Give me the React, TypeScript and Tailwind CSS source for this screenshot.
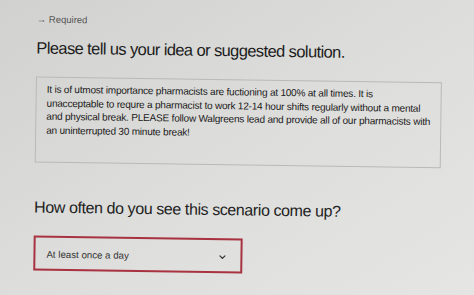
import { ChevronDown } from 'lucide-react'

export default function App() {
    return (
        <div
            className="w-[474px] h-[295px] overflow-hidden bg-gradient-to-br from-[#d1d1cf] via-[#dddddb] to-[#e5e5e3]"
            style={{ fontFamily: '"Liberation Sans", Arial, sans-serif' }}
        >
            <div className="pl-[37px] pt-[14px] rotate-[0.8deg] origin-top-left">
                {/* Required tag */}
                <div className="text-[9.5px] text-[#555] leading-none">→ Required</div>

                {/* Question 1 */}
                <h2 className="mt-[15px] text-[16.5px] leading-none text-[#1c1c1c] tracking-[-0.6px]">
                    Please tell us your idea or suggested solution.
                </h2>

                <div className="mt-[21px] w-[406px] h-[86px] border border-[#b9b9b7] px-[10px] pt-[5px] text-[10px] leading-[13.5px] text-[#1a1a1a] tracking-[-0.2px] whitespace-nowrap">
                    It is of utmost importance pharmacists are fuctioning at 100% at all times. It is
                    <br />
                    unacceptable to requre a pharmacist to work 12-14 hour shifts regularly without a mental
                    <br />
                    and physical break. PLEASE follow Walgreens lead and provide all of our pharmacists with
                    <br />
                    an uninterrupted 30 minute break!
                </div>

                {/* Question 2 */}
                <h2 className="mt-[37px] text-[16px] leading-none text-[#222] tracking-[-0.4px]">
                    How often do you see this scenario come up?
                </h2>

                <div className="mt-[20px] w-[209px] h-[35px] border-2 border-[#a8323f] flex items-center justify-between pl-[11px] pr-[13px] pt-[3px]">
                    <span className="text-[9.7px] text-[#333]">At least once a day</span>
                    <ChevronDown size={10} strokeWidth={3} className="text-[#333]" />
                </div>
            </div>
        </div>
    )
}
